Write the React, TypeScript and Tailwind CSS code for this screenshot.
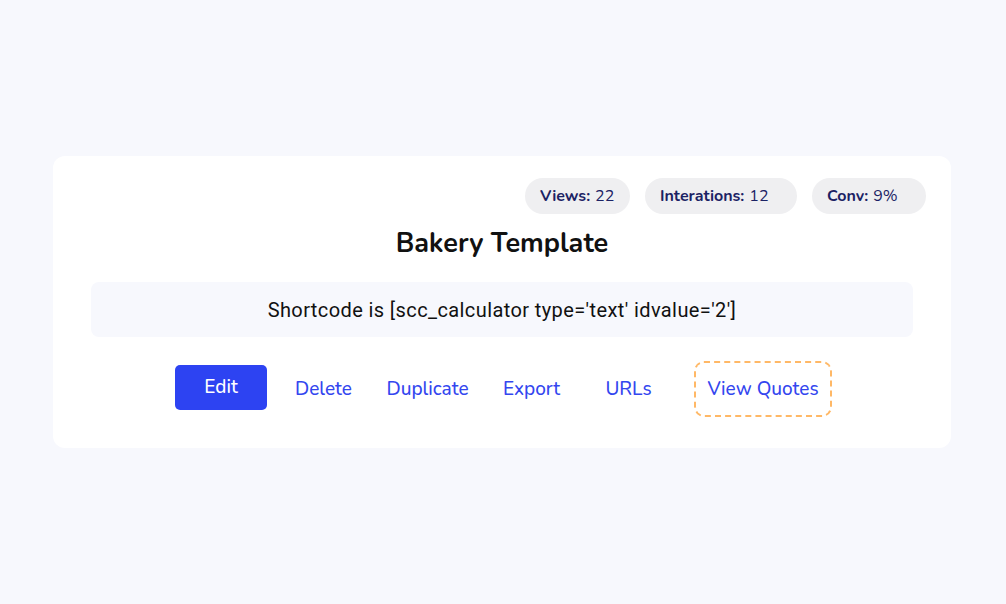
import React from "react";

const font = { fontFamily: "Nunito, Lato, 'Noto Sans', sans-serif" };

function Pill({ label, value }: { label: string; value: string }) {
  return (
    <div className="h-[36px] px-[15px] rounded-full bg-[#efeff1] flex items-center text-[16px] text-[#1b2264] whitespace-nowrap">
      <span className="font-bold">{label}</span>
      <span className="ml-[5px]">{value}</span>
    </div>
  );
}

export default function App() {
  return (
    <div className="w-[1006px] h-[604px] bg-[#f7f8fd] pt-[156px] pl-[53px]" style={font}>
      <div className="w-[898px] h-[292px] bg-white rounded-[12px] flex flex-col pt-[22px]">
        <div className="flex justify-end gap-[15px] pr-[25px]">
          <div className="w-[105px]"><Pill label="Views:" value="22" /></div>
          <div className="w-[152px]"><Pill label="Interations:" value="12" /></div>
          <div className="w-[114px]"><Pill label="Conv:" value="9%" /></div>
        </div>
        <div className="h-[32px] mt-[13px] flex items-center justify-center text-[27px] font-bold text-[#111] leading-none">
          Bakery Template
        </div>
        <div className="mx-[38px] mt-[23px] h-[55px] rounded-[8px] bg-[#f7f8fd] flex items-center justify-center">
          <span
            className="text-[20px] text-[#111] whitespace-nowrap tracking-[0.4px]"
            style={{ fontFamily: "'Roboto', 'Liberation Sans', sans-serif" }}
          >
            Shortcode is [scc_calculator type='text' idvalue='2']
          </span>
        </div>
        <div className="mt-[24px] flex items-center justify-center text-[19px] font-medium ml-[3px]">
          <button className="w-[92px] h-[45px] mb-[3px] rounded-[5px] bg-[#2d43f2] text-white flex items-center justify-center">
            Edit
          </button>
          <span className="ml-[28px] w-[57px] text-center whitespace-nowrap text-[#3346ef] flex justify-center">Delete</span>
          <span className="ml-[35px] w-[81px] text-center whitespace-nowrap text-[#3346ef] flex justify-center">Duplicate</span>
          <span className="ml-[35px] w-[57px] text-center whitespace-nowrap text-[#3346ef] flex justify-center">Export</span>
          <span className="ml-[46px] w-[45px] text-center whitespace-nowrap text-[#3346ef] flex justify-center">URLs</span>
          <div className="ml-[43px] w-[138px] h-[56px] rounded-[10px] border-2 border-dashed border-[#ffb866] flex items-center justify-center text-[#3346ef] whitespace-nowrap">
            View Quotes
          </div>
        </div>
      </div>
    </div>
  );
}
